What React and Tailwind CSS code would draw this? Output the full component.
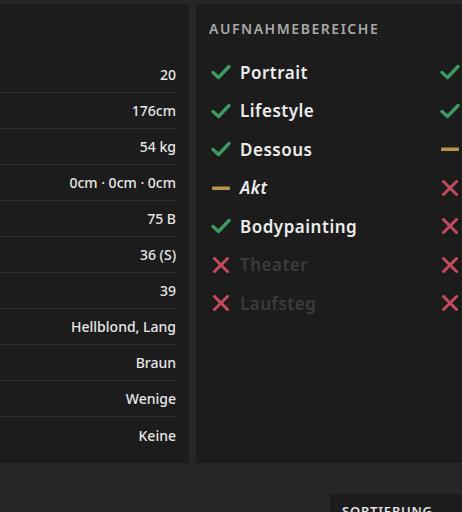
import React from "react";

const values = ["20", "176cm", "54 kg", "0cm · 0cm · 0cm", "75 B", "36 (S)", "39", "Hellblond, Lang", "Braun", "Wenige", "Keine"];

const areas = [
  { label: "Portrait", state: "yes" },
  { label: "Lifestyle", state: "yes" },
  { label: "Dessous", state: "yes" },
  { label: "Akt", state: "partial" },
  { label: "Bodypainting", state: "yes" },
  { label: "Theater", state: "no" },
  { label: "Laufsteg", state: "no" },
];

const second = ["yes", "yes", "partial", "no", "no", "no", "no"];

function StateIcon({ state }) {
  if (state === "yes") {
    return (
      <svg width="20" height="16" viewBox="0 0 20 16" className="shrink-0">
        <path d="M2 8.5 L7.5 13.5 L18 2.5" fill="none" stroke="#3e9a60" strokeWidth="3.4" strokeLinecap="round" strokeLinejoin="round" />
      </svg>
    );
  }
  if (state === "partial") {
    return (
      <svg width="20" height="16" viewBox="0 0 20 16" className="shrink-0">
        <rect x="1" y="6.5" width="18" height="3.5" rx="1" fill="#b8944c" />
      </svg>
    );
  }
  return (
    <svg width="20" height="16" viewBox="0 0 20 16" className="shrink-0">
      <path d="M3.5 1.5 L16.5 14.5 M16.5 1.5 L3.5 14.5" fill="none" stroke="#c24a5c" strokeWidth="3" strokeLinecap="round" />
    </svg>
  );
}

export default function App() {
  return (
    <div className="w-[462px] h-[512px] overflow-hidden bg-[#262626] pt-[4px]" style={{ fontFamily: '"Noto Sans", "Open Sans", sans-serif' }}>
      <div className="flex gap-[7px] h-[459px]">
        {/* Details */}
        <div className="w-[189px] shrink-0 bg-[#1c1c1c] pt-[53px]">
          <div className="mr-[14px]">
            {values.map((v, i) => (
              <div
                key={i}
                className={`h-[36px] flex items-center justify-end -mr-[1px] text-[14px] font-medium text-[#e6e6e6] ${i < values.length - 1 ? "border-b border-[#2c2c2c]" : ""}`}
              >
                {v}
              </div>
            ))}
          </div>
        </div>

        {/* Aufnahmebereiche */}
        <div className="w-[320px] shrink-0 bg-[#1c1c1c] pl-[13px] pt-[16px]">
          <div className="text-[14px] font-semibold tracking-[0.11em] text-[#a9a9a9] leading-[18px]">AUFNAHMEBEREICHE</div>
          <div className="mt-[15px] flex">
            <div className="w-[231px] shrink-0">
              {areas.map((a) => (
                <div key={a.label} className="h-[38.5px] flex items-center gap-[9px] pl-[2px]">
                  <StateIcon state={a.state} />
                  <span
                    className={`text-[17px] font-semibold tracking-[0.03em] ${a.state === "no" ? "text-[#3b3b3b]" : "text-[#ececec]"} ${a.state === "partial" ? "italic" : ""}`}
                  >
                    {a.label}
                  </span>
                </div>
              ))}
            </div>
            <div>
              {second.map((s, i) => (
                <div key={i} className="h-[38.5px] flex items-center">
                  <StateIcon state={s} />
                </div>
              ))}
            </div>
          </div>
        </div>
      </div>

      {/* Sortierung */}
      <div className="flex justify-start pl-[330px] pt-[31px]">
        <div className="w-[140px] h-[40px] bg-[#1c1c1c] pl-[12px] pt-[7px] text-[13px] font-semibold leading-[20px] tracking-[0.06em] text-[#e0e0e0]">
          SORTIERUNG
        </div>
      </div>
    </div>
  );
}
